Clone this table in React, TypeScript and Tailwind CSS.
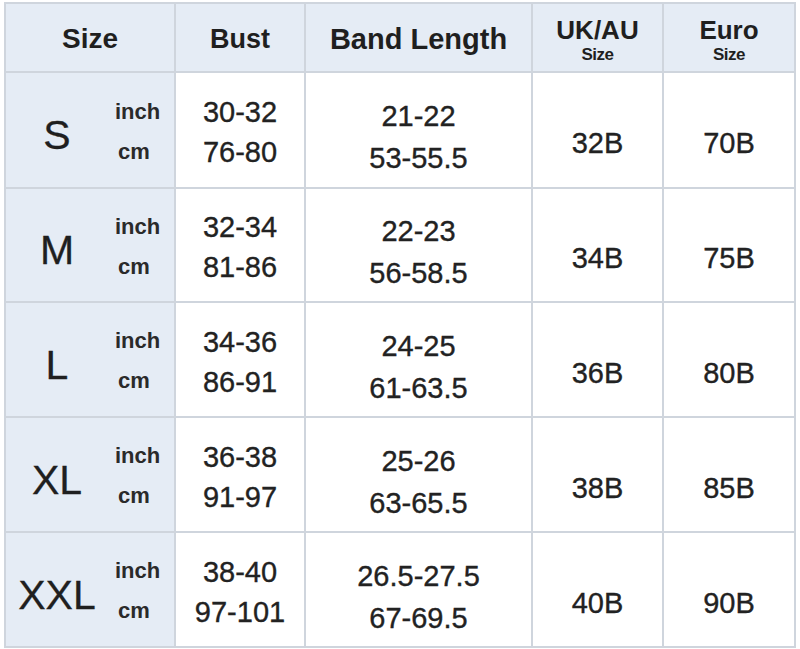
import React from "react";

const rows = [
  { size: "S", bust: ["30-32", "76-80"], band: ["21-22", "53-55.5"], uk: "32B", euro: "70B" },
  { size: "M", bust: ["32-34", "81-86"], band: ["22-23", "56-58.5"], uk: "34B", euro: "75B" },
  { size: "L", bust: ["34-36", "86-91"], band: ["24-25", "61-63.5"], uk: "36B", euro: "80B" },
  { size: "XL", bust: ["36-38", "91-97"], band: ["25-26", "63-65.5"], uk: "38B", euro: "85B" },
  { size: "XXL", bust: ["38-40", "97-101"], band: ["26.5-27.5", "67-69.5"], uk: "40B", euro: "90B" },
];

const head = "bg-[#e5ecf5] flex items-center justify-center font-bold text-[#1f1f1f]";
const cell =
  "bg-white flex flex-col items-center justify-center text-[29px] text-[#222] [-webkit-text-stroke:0.35px_#222]";

const App = () => {
  return (
    <div className="w-[800px] h-[649px] bg-white pt-[2px] pl-[4px] font-['Liberation_Sans',Arial,sans-serif]">
      <div className="grid w-[792px] grid-cols-[168px_128px_225px_129px_130px] grid-rows-[67px_114px_112px_113px_113px_113px] gap-[2px] p-[2px] bg-[#cfd5dd]">
        <div className={head + " text-[28px] pt-[3px]"}>Size</div>
        <div className={head + " text-[27px] pt-[3px]"}>Bust</div>
        <div className={head + " text-[29px] pt-[5px]"}>Band Length</div>
        <div className={head + " flex-col pt-[4px]"}>
          <span className="text-[26px] leading-[30px]">UK/AU</span>
          <span className="text-[17px] leading-[20px] tracking-[-0.5px]">Size</span>
        </div>
        <div className={head + " flex-col pt-[4px]"}>
          <span className="text-[26px] leading-[30px]">Euro</span>
          <span className="text-[17px] leading-[20px] tracking-[-0.5px]">Size</span>
        </div>

        {rows.map((r) => (
          <React.Fragment key={r.size}>
            <div className="bg-[#e5ecf5] flex items-center text-[#1f1f1f]">
              <div className="w-[102px] text-center text-[41px] pt-[12px] [-webkit-text-stroke:0.3px_#1f1f1f]">
                {r.size}
              </div>
              <div className="pl-[7px] pt-[3px] flex flex-col text-[22px] font-bold leading-[40px] text-[#2a2a2a]">
                <span>inch</span>
                <span className="pl-[3px]">cm</span>
              </div>
            </div>
            <div className={cell + " leading-[40px] pt-[4px]"}>
              <span>{r.bust[0]}</span>
              <span>{r.bust[1]}</span>
            </div>
            <div className={cell + " leading-[42px] pt-[14px]"}>
              <span>{r.band[0]}</span>
              <span>{r.band[1]}</span>
            </div>
            <div className={cell + " pt-[28px]"}>{r.uk}</div>
            <div className={cell + " pt-[28px]"}>{r.euro}</div>
          </React.Fragment>
        ))}
      </div>
    </div>
  );
};

export default App;
